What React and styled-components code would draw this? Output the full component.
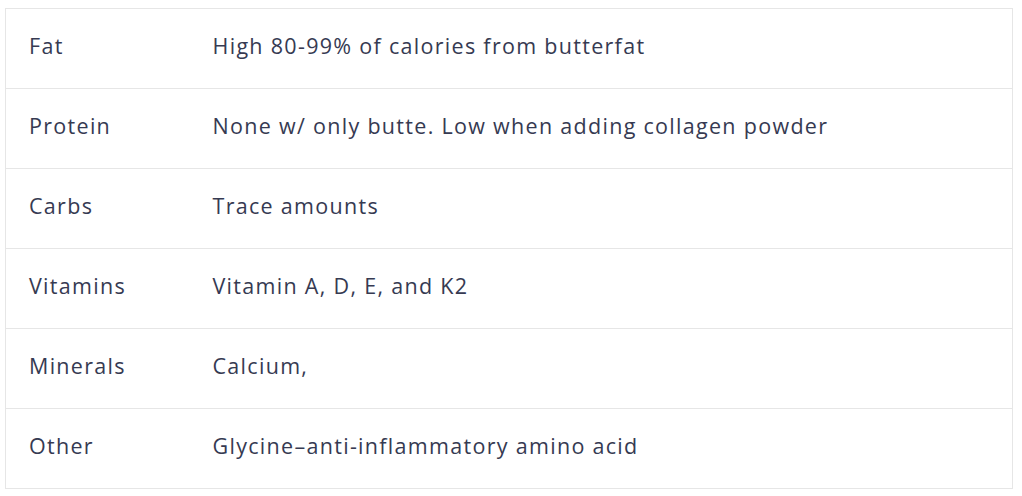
import React from 'react';
import styled, { createGlobalStyle } from 'styled-components';

const rows = [
  { label: 'Fat', value: 'High 80-99% of calories from butterfat' },
  { label: 'Protein', value: 'None w/ only butte. Low when adding collagen powder' },
  { label: 'Carbs', value: 'Trace amounts' },
  { label: 'Vitamins', value: 'Vitamin A, D, E, and K2' },
  { label: 'Minerals', value: 'Calcium,' },
  { label: 'Other', value: 'Glycine–anti-inflammatory amino acid' },
];

function App() {
  return (
    <>
      <GlobalStyle />
      <Page>
        <Table>
          <colgroup>
            <col style={{ width: 184 }} />
            <col />
          </colgroup>
          <tbody>
            {rows.map((row) => (
              <Row key={row.label}>
                <Cell>{row.label}</Cell>
                <Cell>{row.value}</Cell>
              </Row>
            ))}
          </tbody>
        </Table>
      </Page>
    </>
  );
}

export default App;

const GlobalStyle = createGlobalStyle`
  body {
    margin: 0;
    background: #ffffff;
    font-family: 'Open Sans', 'Noto Sans', sans-serif;
  }
`;

const Page = styled.div`
  padding: 8px 0 0 5px;
`;

const Table = styled.table`
  width: 1008px;
  table-layout: fixed;
  border-collapse: collapse;
  border: 1px solid #e6e6e6;
`;

const Row = styled.tr`
  height: 80px;
  border-top: 1px solid #e6e6e6;
`;

const Cell = styled.td`
  padding: 0 23px 6px 23px;
  font-size: 21.5px;
  letter-spacing: 1.3px;
  color: #363a52;
  vertical-align: middle;
  white-space: nowrap;
`;
